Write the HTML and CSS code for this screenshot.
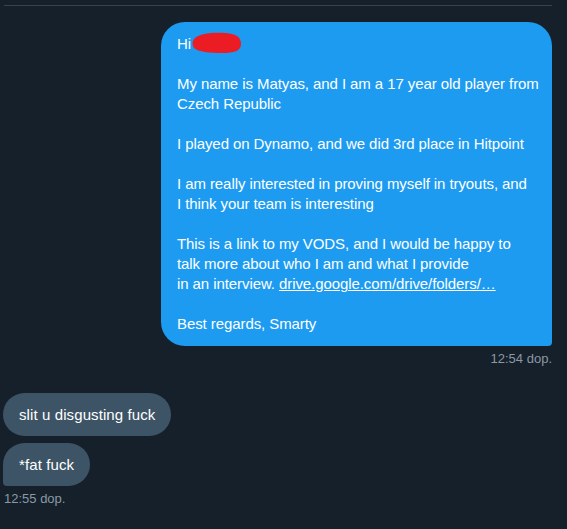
FILE: index.html
```html
<!DOCTYPE html>
<html>
<head>
<meta charset="utf-8">
<link rel="stylesheet" href="styles.css">
</head>
<body>
<div class="chat">
  <div class="divider"></div>
  <div class="sent-group">
    <div class="bubble sent">
      <div class="line">Hi<svg class="redact" width="50" height="22" viewBox="0 0 50 22"><path d="M3 6 C8 1 22 0 34 1 C44 2 49 5 49 12 C49 19 42 21 30 21 C18 21 6 20 2 16 C0 12 0 9 3 6 Z" fill="#ec1c24"/></svg></div>
      <div class="line">&nbsp;</div>
      <div class="line">My name is Matyas, and I am a 17 year old player from</div>
      <div class="line">Czech Republic</div>
      <div class="line">&nbsp;</div>
      <div class="line">I played on Dynamo, and we did 3rd place in Hitpoint</div>
      <div class="line">&nbsp;</div>
      <div class="line">I am really interested in proving myself in tryouts, and</div>
      <div class="line">I think your team is interesting</div>
      <div class="line">&nbsp;</div>
      <div class="line">This is a link to my VODS, and I would be happy to</div>
      <div class="line">talk more about who I am and what I provide</div>
      <div class="line">in an interview. <a class="link" href="#">drive.google.com/drive/folders/…</a></div>
      <div class="line">&nbsp;</div>
      <div class="line">Best regards, Smarty</div>
    </div>
    <div class="time time-right">12:54 dop.</div>
  </div>
  <div class="recv-group">
    <div class="bubble recv first">slit u disgusting fuck</div>
    <div class="bubble recv last">*fat fuck</div>
    <div class="time">12:55 dop.</div>
  </div>
</div>
</body>
</html>
```

FILE: styles.css
```css
html, body {
  margin: 0;
  padding: 0;
  background: #15202b;
}
body {
  width: 567px;
  height: 529px;
  overflow: hidden;
  font-family: "Liberation Sans", Arial, sans-serif;
  color: #ffffff;
}
.chat {
  width: 549px;
  margin-left: 3px;
  padding-top: 5px;
  display: flex;
  flex-direction: column;
}
.divider {
  height: 1px;
  background: #38444d;
  margin-left: 1px;
}
.sent-group {
  display: flex;
  flex-direction: column;
  align-items: flex-end;
  margin-top: 16px;
}
.bubble {
  font-size: 15px;
  line-height: 20px;
  box-sizing: border-box;
}
.sent {
  width: 391px;
  background: #1d9bf0;
  border-radius: 24px 24px 4px 24px;
  padding: 12px 16px;
  letter-spacing: -0.08px;
}
.line {
  white-space: nowrap;
  height: 20px;
  display: flex;
  align-items: center;
}
.redact {
  display: block;
  margin-left: 1px;
  margin-top: -2px;
}
.link {
  color: #ffffff;
  text-decoration: underline;
  margin-left: 4px;
}
.time {
  font-size: 13px;
  line-height: 16px;
  color: #8b98a5;
  margin-top: 5px;
  margin-left: 1px;
}
.time-right {
  margin-right: 0;
}
.recv-group {
  display: flex;
  flex-direction: column;
  align-items: flex-start;
  margin-top: 26px;
}
.recv {
  background: #3d5466;
  padding: 12px 16px;
  border-radius: 22px;
  height: 43px;
  letter-spacing: 0.1px;
}
.recv.last {
  margin-top: 7px;
  border-radius: 22px 22px 22px 4px;
}
```
